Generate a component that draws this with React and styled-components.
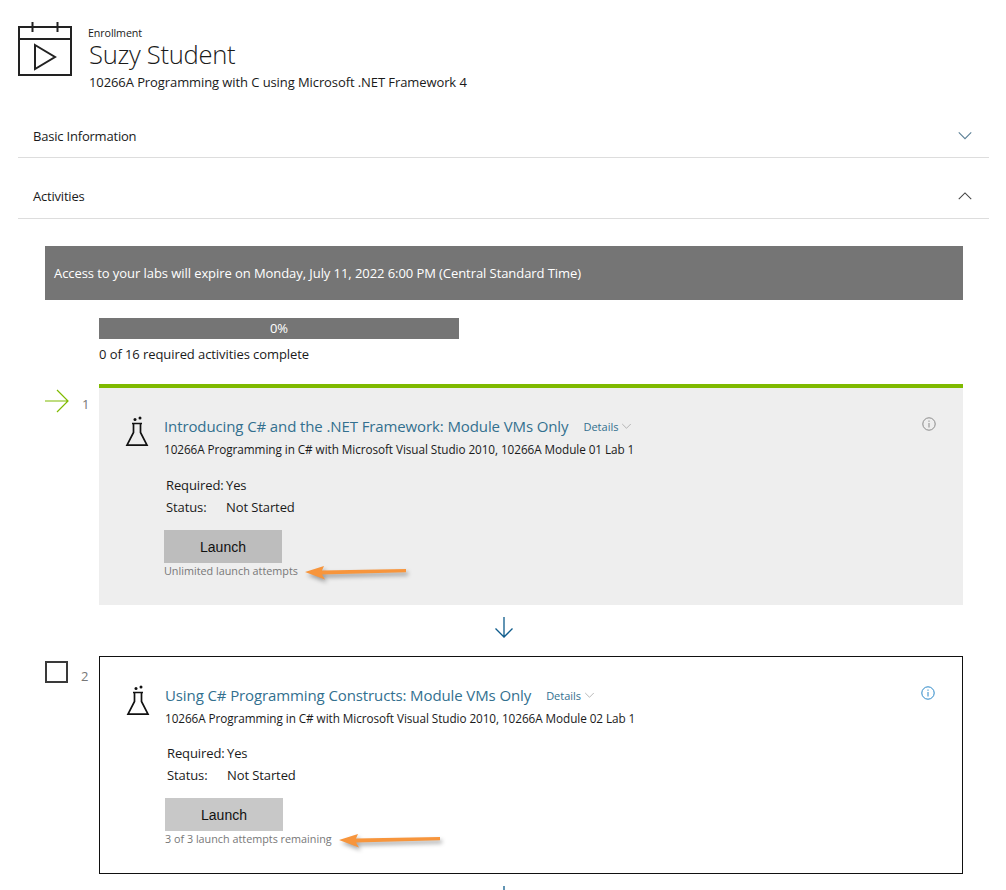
import styled, { createGlobalStyle } from 'styled-components';

const activities = [
  {
    number: 1,
    current: true,
    title: 'Introducing C# and the .NET Framework: Module VMs Only',
    course: '10266A Programming in C# with Microsoft Visual Studio 2010, 10266A Module 01 Lab 1',
    attempts: 'Unlimited launch attempts',
    pointer: 141,
  },
  {
    number: 2,
    current: false,
    title: 'Using C# Programming Constructs: Module VMs Only',
    course: '10266A Programming in C# with Microsoft Visual Studio 2010, 10266A Module 02 Lab 1',
    attempts: '3 of 3 launch attempts remaining',
    pointer: 174,
  },
];

function CalendarPlay() {
  return (
    <HeaderIcon viewBox="0 0 54 54" fill="none" stroke="#222" strokeWidth="2">
      <path d="M1 5h52v48H1zM1 17h52M14.5 0v10M39.500 0v10" />
      <path d="M17 23l20 12-20 12z" />
    </HeaderIcon>
  );
}

function Flask() {
  return (
    <FlaskIcon viewBox="0 0 24 32" fill="none" stroke="#111" strokeWidth="1.7">
      <path d="M7 8.500h10M8.500 8.500v9L2 30.200h20l-6.500-12.700v-9" />
      <circle cx="10" cy="4.500" r="1.500" fill="#111" stroke="none" />
      <circle cx="15" cy="3" r="1.500" fill="#111" stroke="none" />
    </FlaskIcon>
  );
}

function Chevron({ up, size = 16, color = '#5a7f95' }) {
  return (
    <svg width={size} height={size * 0.6} viewBox="0 0 16 10" fill="none" stroke={color} strokeWidth="1.100">
      <path d={up ? 'M1.500 8.500L8 2l6.500 6.500' : 'M1.500 1.500L8 8l6.500-6.500'} />
    </svg>
  );
}

function InfoIcon({ color }) {
  return (
    <InfoSvg viewBox="0 0 14 14" fill="none" stroke={color}>
      <circle cx="7" cy="7" r="6.200" />
      <path d="M7 6v4.500M7 3.500v1.300" />
    </InfoSvg>
  );
}

function Activity({ item }) {
  return (
    <StepRow>
      <Marker>
        {item.current ? (
          <svg width="24" height="24" viewBox="0 0 24 24" fill="none" stroke="#7fba00" strokeWidth="1.200">
            <path d="M0 12h23M12 1l11 11-11 11" />
          </svg>
        ) : (
          <CheckBox />
        )}
        <StepNumber>{item.number}</StepNumber>
      </Marker>
      <Card $current={item.current}>
        <CardHead>
          <Flask />
          <div>
            <TitleLine>
              <CardTitle>{item.title}</CardTitle>
              <Details>Details</Details>
              <Chevron size={11} color="#a0a0a0" />
            </TitleLine>
            <CourseName>{item.course}</CourseName>
          </div>
          <InfoIcon color={item.current ? '#8a8a8a' : '#2b88c8'} />
        </CardHead>
        <CardBody $current={item.current}>
          <Facts>
            <dt>Required:</dt>
            <dd>Yes</dd>
            <dt>Status:</dt>
            <dd>Not Started</dd>
          </Facts>
          <LaunchButton $current={item.current}>Launch</LaunchButton>
          <AttemptsLine>
            {item.attempts}
            <Pointer $left={item.pointer} viewBox="0 0 112 22" width="112" height="22">
              <path fill="#f7953c" d="M0 7l19-6-2 4.500 84-1.500v3.200L17 9.500l3 5z" />
            </Pointer>
          </AttemptsLine>
        </CardBody>
      </Card>
    </StepRow>
  );
}

function NextArrow() {
  return (
    <Connector>
      <svg width="20" height="22" viewBox="0 0 20 22" fill="none" stroke="#0f5c8c" strokeWidth="1.300">
        <path d="M10 0v20M1.500 11.500L10 20l8.500-8.500" />
      </svg>
    </Connector>
  );
}

export default function App() {
  return (
    <Page>
      <GlobalStyle />
      <Header>
        <CalendarPlay />
        <HeaderText>
          <Eyebrow>Enrollment</Eyebrow>
          <StudentName>Suzy Student</StudentName>
          <CourseTitle>10266A Programming with C using Microsoft .NET Framework 4</CourseTitle>
        </HeaderText>
      </Header>
      <Section>
        <span>Basic Information</span>
        <Chevron />
      </Section>
      <Section>
        <span>Activities</span>
        <Chevron up color="#444" />
      </Section>
      <Activities>
        <Notice>Access to your labs will expire on Monday, July 11, 2022 6:00 PM (Central Standard Time)</Notice>
        <Progress>
          <ProgressBar>0%</ProgressBar>
          <ProgressText>0 of 16 required activities complete</ProgressText>
        </Progress>
        {activities.map((item) => (
          <div key={item.number}>
            <Activity item={item} />
            <NextArrow />
          </div>
        ))}
      </Activities>
    </Page>
  );
}

const GlobalStyle = createGlobalStyle`
  html, body {
    margin: 0;
    height: 890px;
    overflow: hidden;
    background: #fff;
  }
  body {
    font-family: 'Open Sans', 'Noto Sans', sans-serif;
    color: #1a1a1a;
  }
`;

const Page = styled.div`
  width: 1006px;
  height: 890px;
  overflow: hidden;
  box-sizing: border-box;
  padding: 22px 17px 0 18px;
`;

const Header = styled.header`
  display: flex;
  gap: 16px;
  height: 76px;
`;

const HeaderIcon = styled.svg`
  width: 54px;
  height: 54px;
  flex: none;
`;

const HeaderText = styled.div`
  display: flex;
  flex-direction: column;
`;

const Eyebrow = styled.div`
  font-size: 10.7px;
  line-height: 16px;
  margin-top: 3px;
  letter-spacing: -0.1px;
`;

const StudentName = styled.div`
  font-size: 25.6px;
  font-weight: 300;
  line-height: 28px;
  letter-spacing: -0.3px;
  padding-left: 1px;
`;

const CourseTitle = styled.div`
  font-size: 13px;
  line-height: 26px;
  letter-spacing: -0.09px;
  padding-left: 1px;
`;

const Section = styled.div`
  display: flex;
  align-items: center;
  justify-content: space-between;
  height: 60px;
  box-sizing: border-box;
  padding: 16px 16px 0 15px;
  border-bottom: 1px solid #ddd;
  font-size: 13px;
  letter-spacing: -0.2px;

  & + & {
    height: 61px;
  }
`;

const Activities = styled.div`
  padding: 27px 26px 0 27px;
`;

const Notice = styled.div`
  background: #757575;
  color: #fff;
  height: 54px;
  display: flex;
  align-items: center;
  padding-left: 9px;
  font-size: 13px;
  letter-spacing: -0.07px;
`;

const Progress = styled.div`
  margin: 18px 0 0 54px;
  height: 66px;
`;

const ProgressBar = styled.div`
  width: 360px;
  height: 21px;
  background: #757575;
  color: #fff;
  font-size: 13px;
  line-height: 21px;
  text-align: center;
`;

const ProgressText = styled.div`
  font-size: 13px;
  line-height: 30px;
  letter-spacing: -0.08px;
`;

const StepRow = styled.div`
  display: flex;
`;

const Marker = styled.div`
  width: 54px;
  flex: none;
  display: flex;
  align-items: flex-start;
  gap: 13px;
  padding-top: 5px;
  box-sizing: border-box;
`;

const CheckBox = styled.div`
  width: 23px;
  height: 22px;
  box-sizing: border-box;
  border: 2px solid #3a3a3a;
  flex: none;
`;

const StepNumber = styled.span`
  font-size: 13px;
  line-height: 24px;
  margin-top: 3px;
  color: #777;
`;

const Card = styled.section`
  flex: 1;
  box-sizing: border-box;
  height: ${(p) => (p.$current ? '221px' : '218px')};
  padding: 27px 27px 0 26px;
  background: ${(p) => (p.$current ? '#eee' : '#fff')};
  border: ${(p) => (p.$current ? 'none' : '1px solid #111')};
  border-top: ${(p) => (p.$current ? '4px solid #7fba00' : '1px solid #111')};
`;

const CardHead = styled.div`
  display: flex;
  align-items: flex-start;
`;

const FlaskIcon = styled.svg`
  width: 24px;
  height: 32px;
  flex: none;
  margin: 0 15px 0 0;
`;

const TitleLine = styled.div`
  display: flex;
  align-items: center;
  gap: 3px;
  height: 22px;
`;

const CardTitle = styled.div`
  font-size: 15px;
  color: #33708f;
  margin-right: 12px;
  letter-spacing: -0.11px;
`;

const Details = styled.span`
  font-size: 11px;
  color: #33708f;
`;

const CourseName = styled.div`
  font-size: 11.75px;
  line-height: 22px;
  margin-top: 1px;
  letter-spacing: -0.07px;
`;

const InfoSvg = styled.svg`
  width: 14px;
  height: 14px;
  margin-left: auto;
  margin-top: 2px;
  flex: none;
`;

const CardBody = styled.div`
  padding: ${(p) => (p.$current ? '14px' : '13px')} 0 0 39px;
`;

const Facts = styled.dl`
  display: grid;
  grid-template-columns: 60px 1fr;
  margin: 0 0 12px 2px;
  font-size: 13px;
  line-height: 22px;
  letter-spacing: -0.1px;

  dd {
    margin: 0;
  }
`;

const LaunchButton = styled.button`
  display: block;
  width: 118px;
  height: 33px;
  border: none;
  padding: 0;
  background: ${(p) => (p.$current ? '#bdbdbd' : '#c8c8c8')};
  color: #111;
  font-family: 'Liberation Sans', Arial, sans-serif;
  font-size: 14px;
`;

const AttemptsLine = styled.div`
  position: relative;
  font-size: 10.8px;
  line-height: 16px;
  color: #777;
`;

const Pointer = styled.svg`
  position: absolute;
  left: ${(p) => p.$left}px;
  top: 2px;
  overflow: visible;
  filter: drop-shadow(2px 3px 2px rgba(0, 0, 0, 0.35));
`;

const Connector = styled.div`
  height: 51px;
  box-sizing: border-box;
  padding: 12px 0 0 449px;
`;
